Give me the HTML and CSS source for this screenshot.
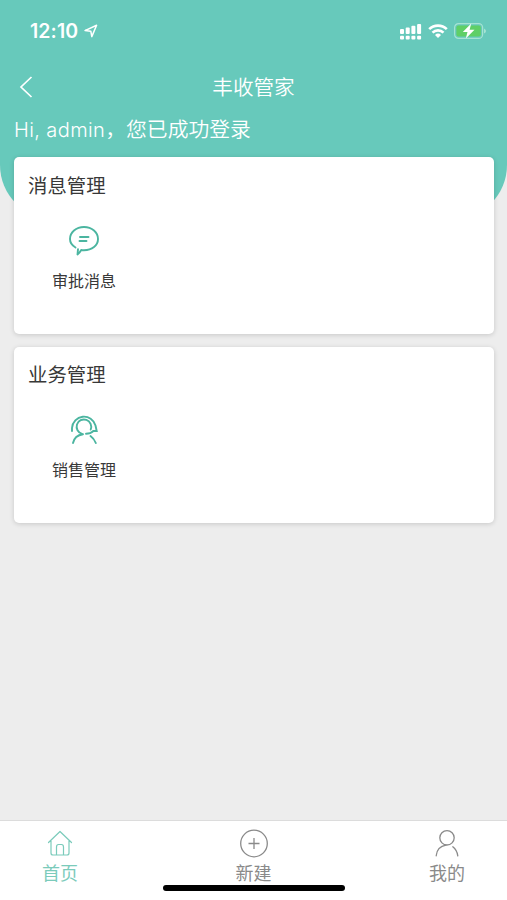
FILE: index.html
```html
<!DOCTYPE html>
<html lang="zh-CN">
<head>
    <meta charset="UTF-8">
    <meta name="viewport" content="width=device-width, initial-scale=1.0">
    <title>丰收管家</title>
    <link rel="stylesheet" href="styles.css">
</head>
<body>
    <div class="app">
        <div class="header-bg"></div>

        <div class="status-bar">
            <div class="status-left">
                <span class="time">12:10</span>
                <svg class="location" width="14" height="14" viewBox="0 0 14 14">
                    <path d="M1 6.6L12.6 1.2L7.8 12.6L6.8 7.2Z" fill="none" stroke="#fff" stroke-width="1.5" stroke-linejoin="round"/>
                </svg>
            </div>
            <div class="status-right">
                <svg width="22" height="17" viewBox="0 0 22 17" fill="#fff">
                    <rect x="0" y="6" width="4" height="5" rx="1"/>
                    <rect x="5.7" y="4.5" width="4" height="6.5" rx="1"/>
                    <rect x="11.4" y="2.8" width="4" height="8.2" rx="1"/>
                    <rect x="17.1" y="1" width="4" height="10" rx="1"/>
                    <rect x="0" y="12.8" width="4" height="3.7" rx="1"/>
                    <rect x="5.7" y="12.8" width="4" height="3.7" rx="1"/>
                    <rect x="11.4" y="12.8" width="4" height="3.7" rx="1"/>
                    <rect x="17.1" y="12.8" width="4" height="3.7" rx="1"/>
                </svg>
                <svg width="20" height="16" viewBox="0 0 20 16" fill="none" stroke="#fff" stroke-width="2.6">
                    <path d="M1.2 6.2A12.5 12.5 0 0 1 18.8 6.2"/>
                    <path d="M4.5 9.6A7.8 7.8 0 0 1 15.5 9.6"/>
                    <path d="M10 15L7 12A4.3 4.3 0 0 1 13 12Z" fill="#fff" stroke="none"/>
                </svg>
                <svg width="33" height="18" viewBox="0 0 33 18">
                    <rect x="0.6" y="1.6" width="28" height="14.8" rx="4" fill="none" stroke="#a6e3d3" stroke-width="1.2"/>
                    <rect x="2.4" y="3.4" width="24.4" height="11.2" rx="2" fill="#5fcf67"/>
                    <path d="M30 6.4Q32 7.4 32 9Q32 10.6 30 11.6Z" fill="#a6e3d3"/>
                    <path d="M17.2 1.5L8.8 10H13.5L11.8 16.5L20.5 7.8H15.6Z" fill="#fff"/>
                </svg>
            </div>
        </div>

        <div class="nav-bar">
            <svg class="back" width="14" height="22" viewBox="0 0 14 22">
                <path d="M12.5 1L2 11L12.5 21" fill="none" stroke="#fff" stroke-width="1.7"/>
            </svg>
            <h1>丰收管家</h1>
        </div>

        <p class="greeting"><span class="latin">Hi, admin</span>，您已成功登录</p>

        <div class="content">
            <div class="card">
                <h2>消息管理</h2>
                <div class="menu-item">
                    <svg width="32" height="32" viewBox="0 0 32 32" fill="none" stroke="#4bb5a0" stroke-width="1.9" stroke-linecap="round" stroke-linejoin="round">
                        <path d="M7.5 23.5C4 21.5 2 18.5 2 15C2 8.5 8 3 16 3S30 8.5 30 15S24 26.2 16 26.2Q14.5 26.2 13.2 26Q11.7 28.8 9.500 30.5L10 25.2"/>
                        <path d="M12 13H20.5M11.5 17H18.5"/>
                    </svg>
                    <span>审批消息</span>
                </div>
            </div>

            <div class="card">
                <h2>业务管理</h2>
                <div class="menu-item">
                    <svg width="32" height="32" viewBox="0 0 32 32" fill="none" stroke="#4bb5a0" stroke-width="1.9" stroke-linecap="round">
                        <path d="M4 18V15A12 12.2 0 0 1 27.5 12.5L28.7 18H25.5"/>
                        <path d="M14 20.8A7.3 7.3 0 1 1 22.7 16.5"/>
                        <path d="M18 20.8Q22.5 20.8 25.5 18"/>
                        <path d="M5 30Q6.5 22.5 15 21.2M22.5 23Q26 25.5 27.8 30"/>
                    </svg>
                    <span>销售管理</span>
                </div>
            </div>
        </div>

        <div class="tab-bar">
            <div class="tab active">
                <svg width="30" height="30" viewBox="0 0 30 30" fill="none" stroke="currentColor" stroke-width="1.2" stroke-linecap="round" stroke-linejoin="round">
                    <path d="M3.5 13.5L15 2.5L26.5 13.5M6 12V24Q6 26 8 26H22Q24 26 24 24V12M11.5 26V18Q11.5 15.5 13.5 15.5H16.5Q18.5 15.5 18.5 18V26"/>
                </svg>
                <span>首页</span>
            </div>
            <div class="tab">
                <svg width="30" height="30" viewBox="0 0 30 30" fill="none" stroke="currentColor" stroke-width="1.3">
                    <circle cx="15" cy="14.5" r="13.3"/>
                    <path d="M9.5 14.5H20.5M15 9V20"/>
                </svg>
                <span>新建</span>
            </div>
            <div class="tab">
                <svg width="30" height="30" viewBox="0 0 30 30" fill="none" stroke="currentColor" stroke-width="1.3" stroke-linecap="round">
                    <circle cx="15" cy="8.8" r="7.2"/>
                    <path d="M4.2 26.8Q5 17.5 14 16.1M20.8 17.8Q25 21 25.8 26.8"/>
                </svg>
                <span>我的</span>
            </div>
            <div class="home-indicator"></div>
        </div>
    </div>
</body>
</html>
```

FILE: styles.css
```css
* {
    margin: 0;
    padding: 0;
    box-sizing: border-box;
}

body {
    font-family: "Liberation Sans", "Noto Sans CJK SC", sans-serif;
    background: #ededed;
}

svg {
    display: block;
}

.app {
    position: relative;
    display: flex;
    flex-direction: column;
    height: 100vh;
    overflow: hidden;
}

/* 顶部弧形背景 */
.header-bg {
    position: absolute;
    top: 0;
    left: 0;
    right: 0;
    height: 219px;
    z-index: -1;
    background: #67c9bb;
    border-radius: 0 0 54px 54px;
}

.status-bar {
    display: flex;
    justify-content: space-between;
    align-items: center;
    height: 62px;
    padding: 0 20px 0 30px;
    color: #fff;
}

.status-left,
.status-right {
    display: flex;
    align-items: center;
    gap: 6px;
}

.time {
    font-family: Inter, sans-serif;
    font-size: 19.5px;
    font-weight: 600;
    letter-spacing: 0.1px;
}

.nav-bar {
    display: grid;
    grid-template-columns: 60px 1fr 60px;
    align-items: center;
    height: 50px;
    color: #fff;
}

.nav-bar .back {
    margin-left: 19px;
}

.nav-bar h1 {
    padding-top: 1px;
    font-size: 20.6px;
    font-weight: 350;
    line-height: 30px;
    text-align: center;
}

.greeting {
    height: 45px;
    padding: 3px 14px 0;
    color: #fff;
    font-size: 20.8px;
    font-weight: 350;
    line-height: 30px;
    white-space: nowrap;
}

.greeting .latin {
    font-family: Inter, sans-serif;
    font-size: 20px;
    font-weight: 300;
    letter-spacing: 0.4px;
}

.content {
    flex: 1;
    display: flex;
    flex-direction: column;
    gap: 13px;
    padding: 0 13px 0 14px;
}

.card {
    height: 176.5px;
    padding: 13.5px 14px 13px;
    background: #fff;
    border-radius: 5px;
    box-shadow: 0 1px 5px rgba(0, 0, 0, 0.16);
}

.card h2 {
    color: #383838;
    font-size: 19.4px;
    font-weight: 400;
    line-height: 30px;
}

.menu-item {
    display: flex;
    flex-direction: column;
    align-items: center;
    gap: 14px;
    width: 112px;
    margin-top: 23px;
    color: #383838;
    font-size: 16px;
    line-height: 24px;
}

.tab-bar {
    position: relative;
    display: flex;
    justify-content: space-between;
    height: 80px;
    padding-top: 8px;
    background: #fff;
    border-top: 1px solid #dcdcdc;
}

.tab {
    display: flex;
    flex-direction: column;
    align-items: center;
    gap: 1px;
    width: 120px;
    color: #8a8a8a;
    font-size: 18px;
    line-height: 28px;
}

.tab.active {
    color: #7bcbbb;
}

.home-indicator {
    position: absolute;
    left: 163px;
    bottom: 9px;
    width: 182px;
    height: 6px;
    border-radius: 3px;
    background: #000;
}
```
